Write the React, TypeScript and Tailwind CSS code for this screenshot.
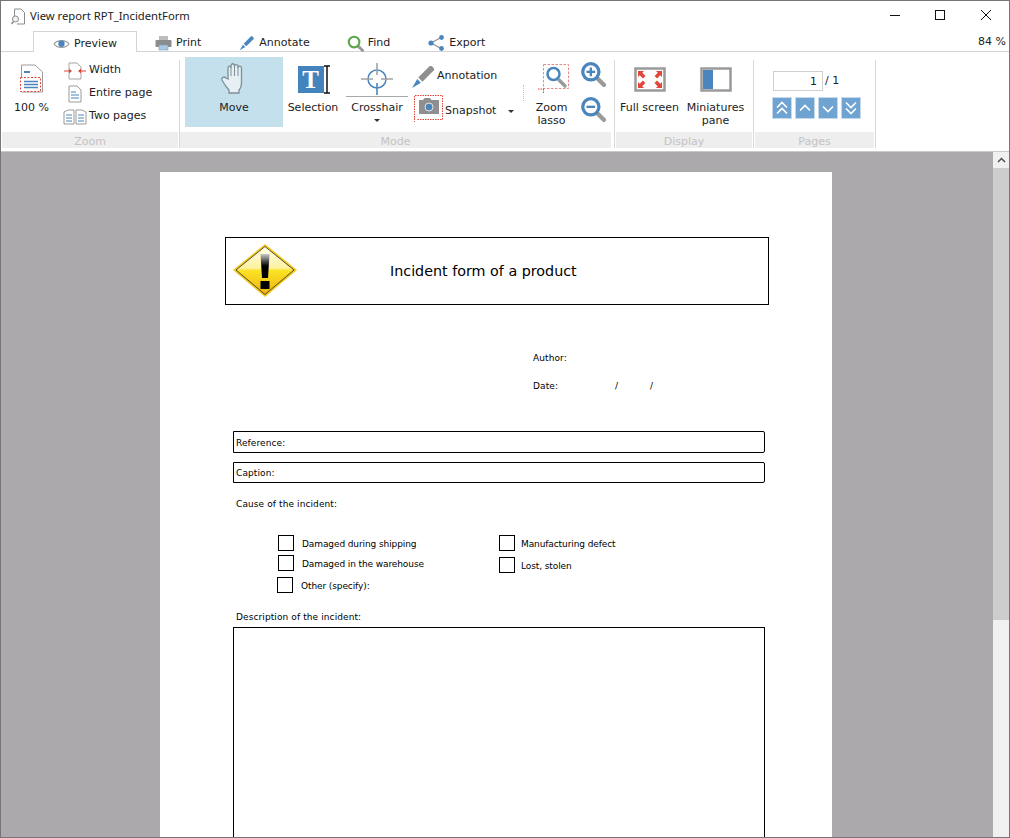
import type { ReactNode } from "react";

const blue = "#4a86bd";
const grey = "#8f8f8f";
const red = "#e0473a";

function Eye() {
  return (
    <svg width="17" height="12" viewBox="0 0 17 12">
      <path d="M1 6C4 1.500 13 1.500 16 6C13 10.500 4 10.500 1 6Z" fill="#fff" stroke="#9a9a9a" strokeWidth="1.200" />
      <circle cx="8.500" cy="5.800" r="3.200" fill={blue} />
    </svg>
  );
}

function Printer() {
  return (
    <svg width="17" height="16" viewBox="0 0 17 16">
      <rect x="4" y="1" width="9" height="5" fill="#bdbdbd" />
      <rect x="0.500" y="5" width="16" height="7" rx="1" fill="#8c8c8c" />
      <rect x="4" y="10" width="9" height="5" fill="#a9c8e2" stroke="#7e9fbd" strokeWidth="0.600" />
    </svg>
  );
}

function Pencil({ size = 16 }: { size?: number }) {
  return (
    <svg width={size} height={size} viewBox="0 0 24 24">
      <path d="M7 13L18 2C20 1 23 4 22 6L11 17Z" fill={size > 20 ? grey : blue} />
      <path d="M6 14.500L9.500 18L1 23Z" fill={blue} />
    </svg>
  );
}

function Lens({ color = "#5aa845", mark, size = 17 }: { color?: string; mark?: "+" | "-"; size?: number }) {
  return (
    <svg width={size} height={size} viewBox="0 0 24 24">
      <path d="M15 15L22 22" stroke="#9a9a9a" strokeWidth="4" strokeLinecap="round" />
      <circle cx="10" cy="10" r="7.500" fill="#fff" stroke={color} strokeWidth="3" />
      {mark && <path d="M6 10H14" stroke={color} strokeWidth="2.200" />}
      {mark === "+" && <path d="M10 6V14" stroke={color} strokeWidth="2.200" />}
    </svg>
  );
}

function Share() {
  return (
    <svg width="17" height="16" viewBox="0 0 17 16">
      <path d="M3 8L13 2.500M3 8L13 13.500" stroke="#8f8f8f" strokeWidth="1.200" />
      <circle cx="3" cy="8" r="2.600" fill={blue} />
      <circle cx="13.500" cy="2.500" r="2.400" fill={blue} />
      <circle cx="13.500" cy="13.500" r="2.400" fill={blue} />
    </svg>
  );
}

function TitleIcon() {
  return (
    <svg width="15" height="17" viewBox="0 0 15 17" fill="none" stroke="#8b8b8b">
      <path d="M3.500 8V1H10L13.500 4.500V16H6" fill="#fff" />
      <circle cx="4.500" cy="11" r="3" fill="#f2f2f2" />
      <path d="M2.500 13.500L0.500 16" strokeWidth="1.500" />
    </svg>
  );
}

function Doc({ w = 14, h = 18 }: { w?: number; h?: number }) {
  return (
    <svg width={w} height={h} viewBox="0 0 14 18">
      <path d="M1 1H9L13 5V17H1Z" fill="#fff" stroke="#9a9a9a" />
      <path d="M3 7H8M3 10H11M3 13H11" stroke={blue} strokeWidth="1.200" />
    </svg>
  );
}

function ZoomPageIcon() {
  return (
    <svg width="24" height="31" viewBox="0 0 24 31">
      <path d="M1.500 1H15L22.500 8V28H1.500Z" fill="#fff" stroke="#9a9a9a" />
      <path d="M4 8H10" stroke={blue} strokeWidth="2" />
      <rect x="0.500" y="13.500" width="20" height="14" fill="#fff" stroke={red} strokeDasharray="2 1.500" />
      <path d="M4 17.500H18M4 20.500H18M4 23.500H18" stroke={blue} strokeWidth="1.600" />
    </svg>
  );
}

function WidthIcon() {
  return (
    <svg width="22" height="18" viewBox="0 0 22 18">
      <path d="M5 1H13L17 5V17H5Z" fill="#fff" stroke="#a5a5a5" />
      <path d="M0 9H7M15 9H22" stroke={red} strokeWidth="1.200" />
      <path d="M5 6.500L8 9L5 11.500ZM17 6.500L14 9L17 11.500Z" fill={red} />
    </svg>
  );
}

function TwoPages() {
  return (
    <svg width="24" height="16" viewBox="0 0 24 16">
      <path d="M1 3L5 1H11V15H1Z" fill="#fff" stroke="#9a9a9a" />
      <path d="M13 1H19L23 3V15H13Z" fill="#fff" stroke="#9a9a9a" />
      <path d="M3 6H9M3 9H9M3 12H9M15 6H21M15 9H21M15 12H21" stroke={blue} />
    </svg>
  );
}

function Hand() {
  return (
    <svg width="26" height="32" viewBox="0 0 26 32">
      <path
        d="M7 17V6C7 3.500 10 3.500 10 6V4C10 1 13.500 1 13.500 4V4.500C13.500 2 17 2 17 4.500V6C17 3.500 20.500 3.500 20.500 6V20C20.500 25 19 27 18 28V31H8V28C6 26 2 20 1 18C0 15.500 3 14 5 16Z"
        fill="#e6f0f4"
        stroke="#7f8f97"
        strokeWidth="1.300"
      />
      <path d="M10 5V14M13.500 4V14M17 5V14" stroke="#7f8f97" />
    </svg>
  );
}

function SelectionIcon() {
  return (
    <div className="ml-[2px] flex items-center">
      <div className="flex h-[27px] w-[26px] items-center justify-center bg-[#4484bd] text-[25px] leading-none font-bold text-white [font-family:'Liberation_Serif',serif]">
        T
      </div>
      <svg width="7" height="29" viewBox="0 0 7 29">
        <path d="M0 1H6M3 1V28M0 28H6" stroke="#111" strokeWidth="1.500" fill="none" />
      </svg>
    </div>
  );
}

function CrosshairIcon() {
  return (
    <svg width="32" height="32" viewBox="0 0 32 32">
      <circle cx="16" cy="16" r="9" fill="none" stroke={blue} strokeWidth="1.500" />
      <path d="M0 16H12M20 16H32M16 0V12" stroke="#a3a3a3" strokeWidth="1.600" />
      <path d="M16 20V32" stroke={blue} strokeWidth="1.600" />
    </svg>
  );
}

function SnapshotIcon() {
  return (
    <svg width="29" height="27" viewBox="0 0 29 27">
      <path d="M0.500 25V0.500H28.500V24.500H3M0.500 21V27" fill="none" stroke={red} strokeDasharray="1.500 1" />
      <g transform="translate(5 3)">
        <path d="M0 2H4L5.500 0H11L12.500 2H20V16H0Z" fill={grey} />
        <circle cx="10" cy="9" r="4" fill={blue} stroke="#e4e4e4" />
      </g>
    </svg>
  );
}

function LassoIcon() {
  return (
    <svg width="32" height="30" viewBox="0 0 32 30">
      <rect x="5.500" y="1.500" width="25" height="24" fill="#fff" stroke="#e58a82" strokeDasharray="2.500 1.500" />
      <path d="M0 26H6M5.500 26V30" stroke={red} strokeDasharray="1.500 1" />
      <path d="M21 17L27 23" stroke="#9a9a9a" strokeWidth="3.500" strokeLinecap="round" />
      <circle cx="15.500" cy="11" r="6" fill="#fff" stroke={blue} strokeWidth="2.500" />
    </svg>
  );
}

function FullScreenIcon() {
  return (
    <svg width="32" height="25" viewBox="0 0 32 25">
      <rect x="1.500" y="1.500" width="29" height="22" fill="#fff" stroke="#9a9a9a" strokeWidth="2.500" />
      <path d="M4 4H10L8.300 5.700L11.500 8.900L9 11.400L5.700 8.200L4 10ZM28 4V10L26.300 8.300L23.100 11.500L20.600 9L23.800 5.700L22 4ZM4 21V15L5.700 16.700L8.900 13.500L11.400 16L8.200 19.300L10 21ZM28 21H22L23.700 19.300L20.500 16.100L23 13.600L26.300 16.800L28 15Z" fill={red} />
    </svg>
  );
}

function MiniaturesIcon() {
  return (
    <svg width="32" height="25" viewBox="0 0 32 25">
      <rect x="1.500" y="1.500" width="29" height="22" fill="#fff" stroke="#9a9a9a" strokeWidth="2.500" />
      <rect x="3" y="3" width="10" height="19" fill={blue} />
    </svg>
  );
}

function Warning() {
  return (
    <svg width="66" height="56" viewBox="0 0 66 56">
      <defs>
        <linearGradient id="warn" x1="0" y1="0" x2="0" y2="1">
          <stop offset="0" stopColor="#fffde8" />
          <stop offset="0.450" stopColor="#fdf2a0" />
          <stop offset="0.500" stopColor="#fbe326" />
          <stop offset="1" stopColor="#eeb40c" />
        </linearGradient>
        <linearGradient id="mark" x1="0" y1="0" x2="0" y2="1">
          <stop offset="0" stopColor="#c9c9c9" />
          <stop offset="0.500" stopColor="#000" />
        </linearGradient>
      </defs>
      <path d="M33 1L65 27L33 54L1 27Z" fill="#f3c81c" />
      <path d="M33 3.500L62 27L33 51.500L4 27Z" fill="url(#warn)" stroke="#2b2b2b" strokeWidth="0.800" />
      <path d="M28.500 11H37.500L36 35H30Z" fill="url(#mark)" />
      <rect x="28.500" y="38" width="9" height="8" fill="#000" />
    </svg>
  );
}

function Chevron({ dir, double }: { dir: "up" | "down"; double?: boolean }) {
  const up = dir === "up";
  const one = up ? "M4 11L9 6L14 11" : "M4 7L9 12L14 7";
  const a = up ? "M4 9L9 4L14 9" : "M4 4L9 9L14 4";
  const b = up ? "M4 15L9 10L14 15" : "M4 10L9 15L14 10";
  return (
    <button className="h-[20px] w-[18px] bg-[#6fa3d2] outline outline-1 outline-[#c6daec]">
      <svg width="18" height="20" viewBox="0 0 18 19" fill="none" stroke="#fff" strokeWidth="1.600">
        {double ? (
          <>
            <path d={a} />
            <path d={b} />
          </>
        ) : (
          <path d={one} transform="translate(0 1)" />
        )}
      </svg>
    </button>
  );
}

function Caret() {
  return <span className="block h-0 w-0 border-x-[3px] border-t-[3px] border-x-transparent border-t-[#333]" />;
}

function Group({
  title,
  outer,
  className,
  children,
}: {
  title: string;
  outer: string;
  className: string;
  children: ReactNode;
}) {
  return (
    <div className={`flex shrink-0 flex-col border-r border-[#d8d8d8] ${outer}`}>
      <div className={`flex h-[72px] ${className}`}>{children}</div>
      <div className="h-[16px] bg-[#eeeeee] text-center text-[11px] leading-[19px] text-[#c3c3c3]">{title}</div>
    </div>
  );
}

function Tab({ icon, label, className }: { icon: ReactNode; label: string; className: string }) {
  return (
    <div className={`flex h-[21px] items-center gap-[4px] pt-[4px] ${className}`}>
      {icon}
      <span>{label}</span>
    </div>
  );
}

function ZoomRow({ icon, label }: { icon: ReactNode; label: string }) {
  return (
    <div className="flex h-[23px] items-center">
      <div className="flex w-[28px] justify-center pr-[1px]">{icon}</div>
      <span>{label}</span>
    </div>
  );
}

function BigLabel({ children }: { children: ReactNode }) {
  return <div className="text-center leading-[13px]">{children}</div>;
}

function Check({ label, gap = "ml-[8px]", className = "" }: { label: string; gap?: string; className?: string }) {
  return (
    <div className={`flex h-[16px] items-center ${className}`}>
      <span className="h-[16px] w-[16px] shrink-0 border border-black" />
      <span className={`whitespace-nowrap pt-[4px] tracking-[-0.1px] ${gap}`}>{label}</span>
    </div>
  );
}

export default function App() {
  return (
    <div className="flex h-[838px] w-[1010px] flex-col overflow-hidden border border-[#77757a] bg-white text-[11px] text-[#222] [font-family:'DejaVu_Sans',sans-serif]">
      {/* title bar */}
      <div className="flex h-[30px] shrink-0 items-center">
        <div className="ml-[10px]">
          <TitleIcon />
        </div>
        <span className="ml-[4px] text-[11.25px] [font-family:'Noto_Sans',sans-serif]">View report RPT_IncidentForm</span>
        <div className="mb-[2px] ml-auto flex items-center">
          <svg width="102" height="14" viewBox="0 0 102 14" fill="none" stroke="#111">
            <path d="M0 7.500H10" />
            <rect x="45.500" y="2.500" width="9" height="9" />
            <path d="M91 2L101 12M101 2L91 12" />
          </svg>
          <span className="w-[17px]" />
        </div>
      </div>

      {/* tabs */}
      <div className="flex h-[21px] shrink-0 items-center border-b border-[#d4d4d4]">
        <Tab
          icon={<Eye />}
          label="Preview"
          className="mt-[1px] ml-[32px] w-[104px] justify-center border border-b-0 border-[#d4d4d4] bg-white"
        />
        <Tab icon={<Printer />} label="Print" className="ml-[18px]" />
        <Tab icon={<Pencil />} label="Annotate" className="ml-[38px]" />
        <Tab icon={<Lens />} label="Find" className="ml-[37px]" />
        <Tab icon={<Share />} label="Export" className="ml-[38px]" />
        <span className="mt-[1px] mr-[3px] ml-auto h-[14px] leading-[14px]">84 %</span>
      </div>

      {/* ribbon */}
      <div className="flex h-[99px] shrink-0 items-start pt-[8px]">
        <Group title="Zoom" outer="ml-[1px] pr-[1px]" className="w-[176px]">
          <div className="flex w-[59px] flex-col items-center pt-[4px]">
            <ZoomPageIcon />
            <div className="mt-[5px]">100 %</div>
          </div>
          <div className="mt-[-1px]">
            <ZoomRow icon={<WidthIcon />} label="Width" />
            <ZoomRow icon={<Doc />} label="Entire page" />
            <ZoomRow icon={<TwoPages />} label="Two pages" />
          </div>
        </Group>

        <Group title="Mode" outer="pr-[3px]" className="w-[431px] pl-[5px]">
          <div className="mt-[-3px] flex h-[70px] w-[98px] flex-col items-center bg-[#c4e0ec] pt-[5px]">
            <Hand />
            <div className="mt-[6px]">Move</div>
          </div>
          <div className="flex w-[60px] flex-col items-center pt-[5px]">
            <SelectionIcon />
            <div className="mt-[6px]">Selection</div>
          </div>
          <div className="ml-[3px] flex w-[62px] flex-col items-center pt-[3px]">
            <CrosshairIcon />
            <div className="mt-[1px] w-full border-t border-[#a8a8a8] pt-[4px] text-center leading-[13px]">Crosshair</div>
            <div className="mt-[5px]">
              <Caret />
            </div>
          </div>
          <div className="ml-[3px] flex w-[112px] flex-col">
            <div className="flex h-[33px] items-center">
              <Pencil size={25} />
              <span className="mt-[-1px] ml-[1px]">Annotation</span>
            </div>
            <div className="mt-[2px] ml-[3px] flex items-center">
              <SnapshotIcon />
              <span className="ml-[2px] pt-[5px]">Snapshot</span>
              <span className="ml-[12px] pt-[5px]">
                <Caret />
              </span>
            </div>
          </div>
          <div className="mt-[25px] h-[16px] border-l border-dotted border-[#c4c4c4]" />
          <div className="ml-[6px] flex w-[43px] flex-col items-center pt-[3px]">
            <div className="ml-[4px]">
              <LassoIcon />
            </div>
            <div className="mt-[8px]">
              <BigLabel>
                Zoom
                <br />
                lasso
              </BigLabel>
            </div>
          </div>
          <div className="ml-[7px] flex flex-col gap-[9px] pt-[1px]">
            <Lens color={blue} mark="+" size={26} />
            <Lens color={blue} mark="-" size={26} />
          </div>
        </Group>

        <Group title="Display" outer="ml-[1px] pr-[1px]" className="w-[136px]">
          <div className="flex w-[67px] flex-col items-center pt-[7px]">
            <FullScreenIcon />
            <div className="mt-[8px] whitespace-nowrap">Full screen</div>
          </div>
          <div className="flex w-[65px] flex-col items-center pt-[7px]">
            <MiniaturesIcon />
            <div className="mt-[9px]">
              <BigLabel>
                Miniatures
                <br />
                pane
              </BigLabel>
            </div>
          </div>
        </Group>

        <Group title="Pages" outer="ml-[1px] pr-[1px]" className="w-[119px] flex-col pt-[11px] pl-[18px]">
          <div className="flex items-center">
            <div className="h-[20px] w-[50px] border border-[#cfcfcf] pr-[5px] text-right leading-[19px]">1</div>
            <span className="ml-[2px]">/ 1</span>
          </div>
          <div className="mt-[7px] flex gap-[5px]">
            <Chevron dir="up" double />
            <Chevron dir="up" />
            <Chevron dir="down" />
            <Chevron dir="down" double />
          </div>
        </Group>
      </div>

      {/* report viewer */}
      <div className="flex min-h-0 flex-1 border-t border-[#c9c9c9] bg-[#aba9ab]">
        <div className="flex min-w-0 flex-1 justify-center overflow-hidden pt-[20px] pr-[2px]">
          <div className="h-[800px] w-[672px] shrink-0 bg-white pt-[65px] pr-[63px] pl-[65px] text-[9px] tracking-[0.1px] text-black">
            <div className="flex h-[68px] items-center border border-black pl-[6px]">
              <Warning />
              <div className="ml-[92px] pt-[2px] text-[14.3px] tracking-normal">Incident form of a product</div>
            </div>

            <div className="mt-[47px] ml-[308px] flex flex-col">
              <div className="h-[12px] leading-[12px]">Author:</div>
              <div className="mt-[16px] flex h-[12px] leading-[12px]">
                <span className="w-[82px]">Date:</span>
                <span className="w-[35px]">/</span>
                <span>/</span>
              </div>
            </div>

            <div className="mt-[39px] ml-[8px] w-[532px]">
              <div className="h-[22px] rounded-r-[2px] border border-black pl-[2px] leading-[23px]">Reference:</div>
              <div className="mt-[9px] h-[21px] rounded-r-[2px] border border-black pl-[2px] leading-[20px]">Caption:</div>
              <div className="mt-[15px] pl-[3px] leading-[12px]">Cause of the incident:</div>

              <div className="mt-[25px] ml-[44px] flex">
                <div className="flex w-[222px] flex-col">
                  <Check label="Damaged during shipping" className="ml-[1px]" />
                  <Check label="Damaged in the warehouse" className="mt-[4px] ml-[1px]" />
                  <Check label="Other (specify):" className="mt-[6px]" />
                </div>
                <div className="flex flex-col">
                  <Check label="Manufacturing defect" gap="ml-[6px]" />
                  <Check label="Lost, stolen" gap="ml-[6px]" className="mt-[6px]" />
                </div>
              </div>

              <div className="mt-[18px] pl-[3px] leading-[12px]">Description of the incident:</div>
              <div className="mt-[4px] h-[300px] border border-black" />
            </div>
          </div>
        </div>

        {/* scrollbar */}
        <div className="flex w-[16px] shrink-0 flex-col bg-[#f0f0f0]">
          <div className="flex h-[16px] items-center justify-center">
            <svg width="9" height="6" viewBox="0 0 9 6" fill="none" stroke="#505050" strokeWidth="1.500">
              <path d="M1 5L4.500 1.500L8 5" />
            </svg>
          </div>
          <div className="h-[452px] bg-[#cdcdcd]" />
        </div>
      </div>
    </div>
  );
}
